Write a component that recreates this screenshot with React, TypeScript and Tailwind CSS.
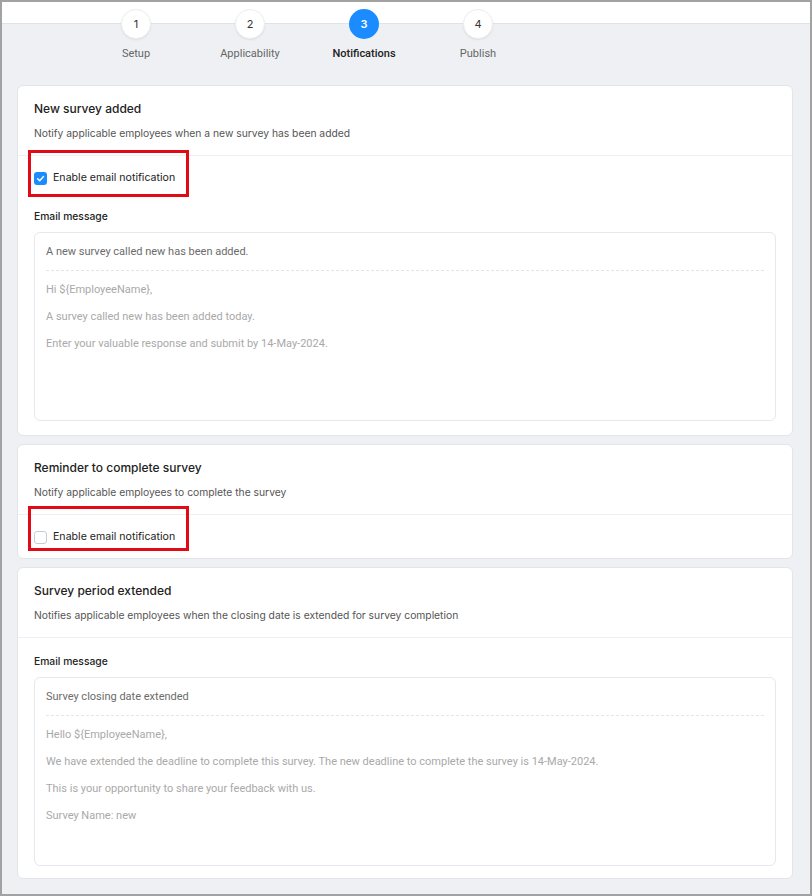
import React from "react";

// Steps of the survey wizard, the third one is active.
const steps = [
  { n: 1, label: "Setup" },
  { n: 2, label: "Applicability" },
  { n: 3, label: "Notifications", active: true },
  { n: 4, label: "Publish" },
];

function Checkbox({ checked }: { checked: boolean }) {
  if (checked) {
    return (
      <span className="flex h-[13px] w-[13px] items-center justify-center rounded-[3px] bg-[#1a8cff]">
        <svg width="9" height="9" viewBox="0 0 10 10" fill="none">
          <path d="M1.8 5.2 L4.1 7.4 L8.3 2.8" stroke="#fff" strokeWidth="1.6" strokeLinecap="round" strokeLinejoin="round" />
        </svg>
      </span>
    );
  }
  return <span className="h-[13px] w-[13px] rounded-[3px] border border-[#c9cdd3] bg-white" />;
}

// The red annotation box drawn over the checkbox row.
function Highlight({ top, height }: { top: number; height: number }) {
  return (
    <div
      className="pointer-events-none absolute left-[10px] w-[161px] border-[3px] border-[#e00b14]"
      style={{ top, height }}
    />
  );
}

function EmailEditor({ subject, lines }: { subject: string; lines: string[] }) {
  return (
    <div className="mt-[8px] h-[189px] rounded-[6px] border border-[#e6e8ec] bg-white px-[11px] pt-[11px] font-['Roboto',sans-serif]">
      <div className="pb-[10px] text-[11px] leading-[16px] text-[#6b6b6b]">{subject}</div>
      <div className="border-t border-dashed border-[#e3e5e8]" />
      <div className="mt-[11px] flex flex-col gap-[11px]">
        {lines.map((l) => (
          <div key={l} className="text-[11px] leading-[16px] text-[#a9a9a9]">
            {l}
          </div>
        ))}
      </div>
    </div>
  );
}

function CardHeader({ title, desc }: { title: string; desc: string }) {
  return (
    <div className="border-b border-[#eef0f2] px-[16px] pb-[14px] pt-[14px]">
      <div className="text-[12px] font-medium leading-[18px] text-[#222]">{title}</div>
      <div className="mt-[7px] text-[10.3px] leading-[16px] text-[#555]">{desc}</div>
    </div>
  );
}

function CheckRow({ checked }: { checked: boolean }) {
  return (
    <div className="flex items-center gap-[6px] px-[16px] pb-[14px] pt-[13px]">
      <Checkbox checked={checked} />
      <span className="text-[10.6px] leading-[18px] text-[#222]">Enable email notification</span>
    </div>
  );
}

export default function App() {
  return (
    <div className="h-[896px] w-[812px] overflow-hidden border-2 border-[#a2a2a2] bg-[#eef0f3] font-['Inter',sans-serif]">
      {/* top white band with stepper overlapping its bottom edge */}
      <div className="h-[22px] border-b border-[#dfe2e6] bg-white" />
      <div className="-mt-[15px] flex pl-[77px]">
        {steps.map((s) => (
          <div key={s.n} className="flex w-[114px] flex-col items-center">
            <div
              className={
                s.active
                  ? "flex h-[30px] w-[30px] items-center justify-center rounded-full bg-[#1a8cff] text-[11px] font-semibold text-white"
                  : "flex h-[30px] w-[30px] items-center justify-center rounded-full border border-[#eceef1] bg-white text-[11px] text-[#333] shadow-[0_1px_2px_rgba(0,0,0,0.08)]"
              }
            >
              {s.n}
            </div>
            <div
              className={
                s.active
                  ? "mt-[7px] font-['Roboto',sans-serif] text-[11px] font-medium leading-[16px] text-[#222]"
                  : "mt-[7px] font-['Roboto',sans-serif] text-[11px] leading-[16px] text-[#666]"
              }
            >
              {s.label}
            </div>
          </div>
        ))}
      </div>

      <div className="mt-[23px] flex flex-col gap-[8px] pl-[15px] pr-[17px]">
        {/* New survey added */}
        <div className="relative h-[351px] rounded-[6px] border border-[#e2e5e9] bg-white">
          <CardHeader title="New survey added" desc="Notify applicable employees when a new survey has been added" />
          <CheckRow checked />
          <div className="px-[16px] pt-[7px]">
            <div className="text-[10.3px] font-medium leading-[16px] text-[#222]">Email message</div>
            <EmailEditor
              subject="A new survey called new has been added."
              lines={[
                "Hi ${EmployeeName},",
                "A survey called new has been added today.",
                "Enter your valuable response and submit by 14-May-2024.",
              ]}
            />
          </div>
          <Highlight top={64} height={47} />
        </div>

        {/* Reminder */}
        <div className="relative h-[115px] rounded-[6px] border border-[#e2e5e9] bg-white">
          <CardHeader title="Reminder to complete survey" desc="Notify applicable employees to complete the survey" />
          <CheckRow checked={false} />
          <Highlight top={61} height={45} />
        </div>

        {/* Survey period extended */}
        <div className="h-[312px] rounded-[6px] border border-[#e2e5e9] bg-white">
          <CardHeader
            title="Survey period extended"
            desc="Notifies applicable employees when the closing date is extended for survey completion"
          />
          <div className="px-[16px] pt-[15px]">
            <div className="text-[10.3px] font-medium leading-[16px] text-[#222]">Email message</div>
            <EmailEditor
              subject="Survey closing date extended"
              lines={[
                "Hello ${EmployeeName},",
                "We have extended the deadline to complete this survey. The new deadline to complete the survey is 14-May-2024.",
                "This is your opportunity to share your feedback with us.",
                "Survey Name: new",
              ]}
            />
          </div>
        </div>
      </div>
    </div>
  );
}
